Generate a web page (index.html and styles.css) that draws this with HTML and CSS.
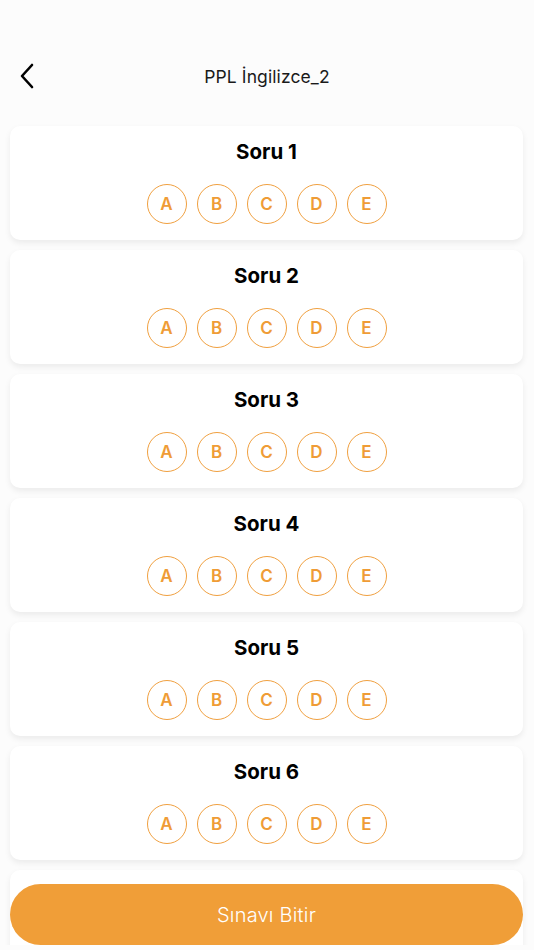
FILE: index.html
```html
<!DOCTYPE html>
<html lang="tr">

<head>
  <meta charset="UTF-8">
  <meta name="viewport" content="width=device-width, initial-scale=1.0">
  <title>PPL İngilizce_2</title>
  <link rel="stylesheet" href="styles.css">
</head>

<body>
  <div class="header">
    <button class="back" aria-label="Geri">
      <svg width="16" height="26" viewBox="0 0 16 26">
        <path d="M13 2 L3 13 L13 24" fill="none" stroke="#000" stroke-width="2.6" stroke-linecap="round" stroke-linejoin="round" />
      </svg>
    </button>
    <div class="title">PPL İngilizce_2</div>
  </div>

  <div class="list">
    <div class="card">
      <div class="question">Soru 1</div>
      <div class="options">
        <span class="opt">A</span><span class="opt">B</span><span class="opt">C</span><span class="opt">D</span><span class="opt">E</span>
      </div>
    </div>
    <div class="card">
      <div class="question">Soru 2</div>
      <div class="options">
        <span class="opt">A</span><span class="opt">B</span><span class="opt">C</span><span class="opt">D</span><span class="opt">E</span>
      </div>
    </div>
    <div class="card">
      <div class="question">Soru 3</div>
      <div class="options">
        <span class="opt">A</span><span class="opt">B</span><span class="opt">C</span><span class="opt">D</span><span class="opt">E</span>
      </div>
    </div>
    <div class="card">
      <div class="question">Soru 4</div>
      <div class="options">
        <span class="opt">A</span><span class="opt">B</span><span class="opt">C</span><span class="opt">D</span><span class="opt">E</span>
      </div>
    </div>
    <div class="card">
      <div class="question">Soru 5</div>
      <div class="options">
        <span class="opt">A</span><span class="opt">B</span><span class="opt">C</span><span class="opt">D</span><span class="opt">E</span>
      </div>
    </div>
    <div class="card">
      <div class="question">Soru 6</div>
      <div class="options">
        <span class="opt">A</span><span class="opt">B</span><span class="opt">C</span><span class="opt">D</span><span class="opt">E</span>
      </div>
    </div>
    <!-- sonraki soru butonun altında kalıyor -->
    <div class="card card-next"></div>
  </div>

  <button class="finish">Sınavı Bitir</button>
</body>

</html>
```

FILE: styles.css
```css
html,
body {
  margin: 0;
  height: 100%;
  overflow: hidden;
}

body {
  background-color: #fcfcfc;
  font-family: Inter, "Noto Sans", "Liberation Sans", sans-serif;
  color: #000;
}

.header {
  display: flex;
  align-items: center;
  justify-content: center;
  height: 50px;
  margin-top: 51px;
  position: relative;
}

.back {
  position: absolute;
  left: 19px;
  top: 12px;
  padding: 0;
  border: none;
  background: transparent;
  display: flex;
}

.title {
  font-size: 17.5px;
  color: #1a1a1a;
  letter-spacing: 0.1px;
}

.list {
  display: flex;
  flex-direction: column;
  gap: 10px;
  height: 844px;
  box-sizing: border-box;
  overflow: hidden;
  padding: 25px 11px 0 10px;
}

.card {
  flex-shrink: 0;
  background-color: #fff;
  border-radius: 10px;
  box-shadow: 0 3px 6px rgba(0, 0, 0, 0.07);
  padding: 14px 0 16px;
  display: flex;
  flex-direction: column;
  align-items: center;
}

.card-next {
  min-height: 84px;
}

.question {
  font-size: 20.5px;
  font-weight: 700;
  line-height: 24px;
}

.options {
  display: flex;
  gap: 10px;
  margin-top: 20px;
}

.opt {
  box-sizing: border-box;
  width: 40px;
  height: 40px;
  border: 1.5px solid #f0a040;
  border-radius: 50%;
  display: flex;
  align-items: center;
  justify-content: center;
  color: #ef9c36;
  font-size: 17px;
  font-weight: 600;
}

.finish {
  position: fixed;
  left: 10px;
  right: 11px;
  bottom: 5px;
  height: 61px;
  border: none;
  border-radius: 31px;
  background-color: #f09e38;
  color: #fff;
  font-family: Inter, "Noto Sans", "Liberation Sans", sans-serif;
  font-size: 20px;
  font-weight: 300;
  letter-spacing: 0.2px;
}
```
